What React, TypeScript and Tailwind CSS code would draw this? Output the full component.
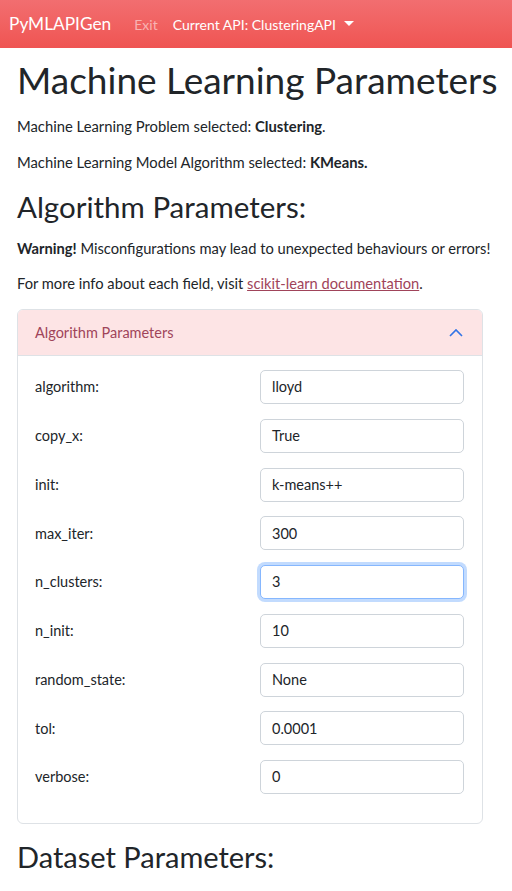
import React from "react";

const params: [string, string, boolean?][] = [
  ["algorithm:", "lloyd"],
  ["copy_x:", "True"],
  ["init:", "k-means++"],
  ["max_iter:", "300"],
  ["n_clusters:", "3", true],
  ["n_init:", "10"],
  ["random_state:", "None"],
  ["tol:", "0.0001"],
  ["verbose:", "0"],
];

export default function App() {
  return (
    <div
      className="min-h-[891px] bg-white text-[#212529]"
      style={{ fontFamily: 'Lato, "Noto Sans", sans-serif' }}
    >
      <nav className="h-[48px] bg-gradient-to-b from-[#f26e70] to-[#ef5452] flex items-center pl-[9px]">
        <span className="text-white text-[17.3px] mr-[23px]">PyMLAPIGen</span>
        <span className="text-[14px] text-[#f8b3b3] mr-[15px]">Exit</span>
        <span className="text-[14px] text-white flex items-center">
          Current API: ClusteringAPI
          <svg width="10" height="6" viewBox="0 0 10 6" className="ml-[8px]">
            <path d="M0 0 L10 0 L5 5 Z" fill="white" />
          </svg>
        </span>
      </nav>

      <div className="pl-[17px] w-[500px]">
        <h1 className="text-[37px] leading-[1.2] font-normal mt-[10px] mb-[13.75px] whitespace-nowrap">
          Machine Learning Parameters
        </h1>
        <p className="text-[14.8px] leading-[21.5px] mb-[14.5px]">
          Machine Learning Problem selected: <b>Clustering</b>.
        </p>
        <p className="text-[14.8px] leading-[21.5px] mb-[15.5px]">
          Machine Learning Model Algorithm selected: <b>KMeans.</b>
        </p>
        <h2 className="text-[29.5px] leading-[36px] font-normal mb-[12.5px]">
          Algorithm Parameters:
        </h2>
        <p className="text-[14.7px] leading-[21.5px] mb-[14px] whitespace-nowrap">
          <b>Warning!</b> Misconfigurations may lead to unexpected behaviours or errors!
        </p>
        <p className="text-[14.7px] leading-[21.5px] mb-[14.5px]">
          For more info about each field, visit{" "}
          <a className="text-[#a0445a] underline">scikit-learn documentation</a>.
        </p>

        <div className="w-[466px] border border-[#dee2e6] rounded-[6px] overflow-hidden">
          <div className="h-[46px] bg-[#fde4e5] border-b border-[#dee2e6] flex items-center justify-between pl-[17px] pr-[18px]">
            <span className="text-[14.5px] text-[#a0445a]">Algorithm Parameters</span>
            <svg width="16" height="16" viewBox="0 0 16 16" fill="none">
              <path d="M2 11 L8 5 L14 11" stroke="#3274e6" strokeWidth="1.6" />
            </svg>
          </div>
          <div className="pl-[17px] pr-[18px] pt-[14px] pb-[29px] flex flex-col gap-[14.75px]">
            {params.map(([label, value, focused]) => (
              <div key={label} className="flex items-center justify-between">
                <span className="text-[14.5px]">{label}</span>
                <div
                  className={
                    focused
                      ? "w-[204px] h-[34px] rounded-[5px] border border-[#86b7fe] shadow-[0_0_0_3px_rgba(13,110,253,0.25)] flex items-center pl-[11px] text-[14.5px] bg-white"
                      : "w-[204px] h-[34px] rounded-[5px] border border-[#ced4da] flex items-center pl-[11px] text-[14.5px] bg-white"
                  }
                >
                  {value}
                </div>
              </div>
            ))}
          </div>
        </div>

        <h2 className="text-[29px] leading-[36px] font-normal mt-[15px]">
          Dataset Parameters:
        </h2>
      </div>
    </div>
  );
}
